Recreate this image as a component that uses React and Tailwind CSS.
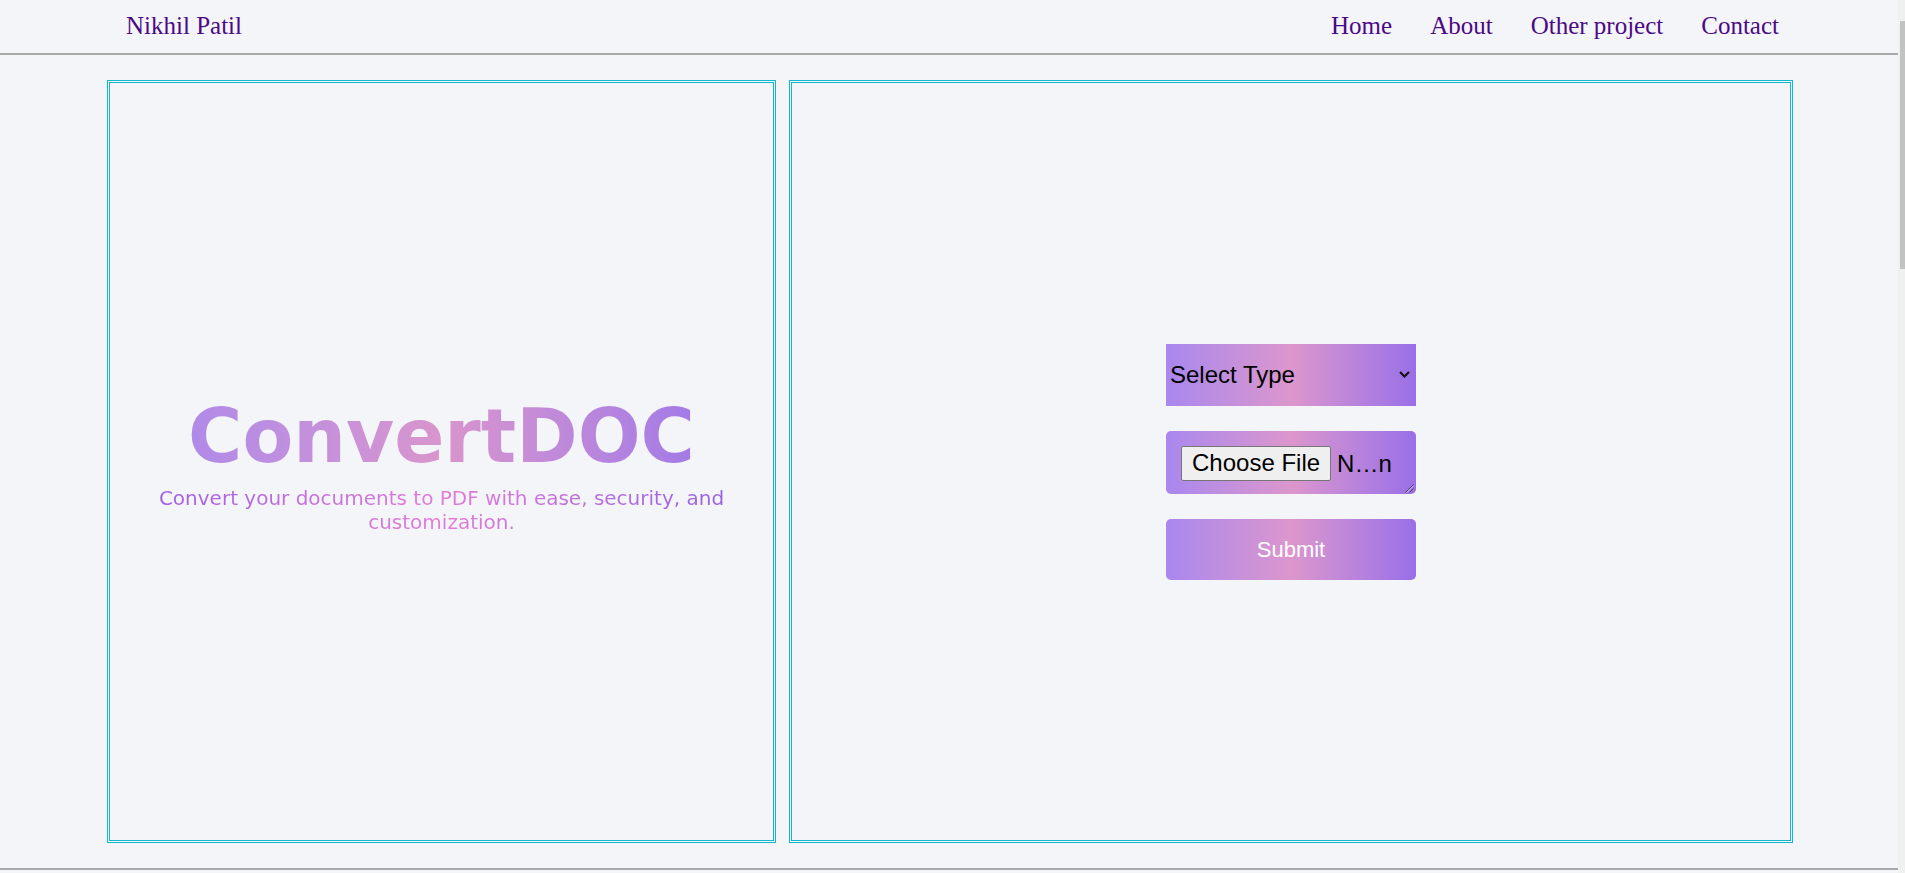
import React from "react";

function Chevron() {
  return (
    <svg width="11" height="7" viewBox="0 0 11 7" fill="none">
      <path d="M1 1 L5.5 5.5 L10 1" stroke="#111" strokeWidth="2" />
    </svg>
  );
}

function ResizeHandle() {
  return (
    <svg width="10" height="10" viewBox="0 0 10 10" className="absolute right-[2px] bottom-[1px]">
      <path d="M9.5 1.5 L1.5 9.5" stroke="#4a4a4a" strokeWidth="1" />
      <path d="M9.5 5.5 L5.5 9.5" stroke="#4a4a4a" strokeWidth="1" />
      <path d="M9.5 2.8 L2.8 9.5" stroke="#ffffff" strokeOpacity="0.5" strokeWidth="1" />
    </svg>
  );
}

export default function App() {
  return (
    <div className="h-screen flex overflow-hidden bg-[#f4f5f9]">
      <div className="flex-1 min-w-0">
        <header className="h-[55px] flex items-center justify-between pl-[126px] pr-[119px] pb-[2px] border-b-2 border-[#a9a9a9] font-['Liberation_Serif',serif] text-[25px] text-[#4b0a84]">
          <div>Nikhil Patil</div>
          <nav className="flex gap-[38px]">
            <a href="#">Home</a>
            <a href="#">About</a>
            <a href="#">Other project</a>
            <a href="#">Contact</a>
          </nav>
        </header>

        <main className="pt-[25px] pb-[25px] border-b-2 border-[#a9a9a9]">
          <div className="w-[1686px] ml-[107px] flex gap-[13px] h-[763px]">
            <section className="w-[669px] border-[3px] border-double border-[#12b8cc] flex flex-col items-center justify-center pt-[3px] font-['DejaVu_Sans',sans-serif]">
              <h1 className="w-fit bg-linear-to-r from-[#b08ae9] via-[#d995cd] to-[#a37ae6] bg-clip-text text-transparent font-bold text-[74px] leading-[87px]">
                ConvertDOC
              </h1>
              <p className="mt-[6px] w-full text-center bg-linear-to-r from-[#9658e6] via-[#e27cd6] to-[#8b5be4] bg-clip-text text-transparent text-[20px] leading-[24px]">
                Convert your documents to PDF with ease, security, and customization.
              </p>
            </section>

            <section className="flex-1 border-[3px] border-double border-[#12b8cc] flex items-center justify-center font-['Liberation_Sans',Arial,sans-serif]">
              <div className="w-[250px] flex flex-col gap-[25px]">
                <div className="h-[62px] flex items-center justify-between pl-[4px] pr-[6px] bg-linear-to-r from-[#a987ee] via-[#dc96cc] to-[#9a6fe8] text-black text-[24px]">
                  <span>Select Type</span>
                  <Chevron />
                </div>

                <div className="relative h-[63px] rounded-[5px] flex items-start pt-[15px] pl-[15px] bg-linear-to-r from-[#a987ee] via-[#dc96cc] to-[#9a6fe8] text-black text-[24px]">
                  <span className="h-[35px] flex items-center px-[10px] bg-[#efefef] border border-[#767676] rounded-[2px] leading-none">
                    Choose File
                  </span>
                  <span className="ml-[6px] leading-[35px]">N…n</span>
                  <ResizeHandle />
                </div>

                <button className="h-[61px] rounded-[5px] bg-linear-to-r from-[#a987ee] via-[#dc96cc] to-[#9a6fe8] text-white text-[22px]">
                  Submit
                </button>
              </div>
            </section>
          </div>
        </main>
      </div>

      <aside className="w-[7px] shrink-0 bg-[#f0f0f0] pt-[21px]">
        <div className="ml-[2px] h-[248px] bg-[#c2c2c2]"></div>
      </aside>
    </div>
  );
}
